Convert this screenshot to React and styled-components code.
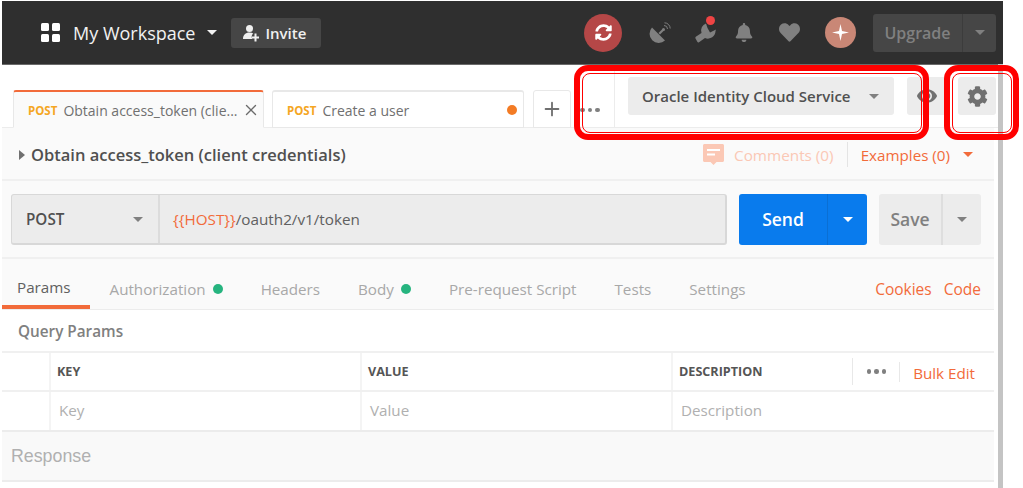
import React from 'react';
import styled, { createGlobalStyle } from 'styled-components';
import { FaBell, FaHeart, FaCog, FaEye, FaSyncAlt } from 'react-icons/fa';
import { Plus, X } from 'lucide-react';

const GlobalStyle = createGlobalStyle`
  html, body { margin: 0; padding: 0; background: #fff; }
  body { font-family: "Open Sans", "Liberation Sans", sans-serif; overflow: hidden; }
`;

const Page = styled.div`
  position: relative;
  width: 1023px;
  height: 488px;
  padding: 1px 20px 0 2px;
  box-sizing: border-box;
  overflow: hidden;
`;

const Scrollbar = styled.div`
  position: absolute;
  left: 998px;
  top: 64px;
  width: 5px;
  height: 424px;
  background: #c4c4c4;
`;

const Header = styled.header`
  display: flex;
  align-items: center;
  justify-content: space-between;
  height: 63px;
  padding: 0 7px 0 39px;
  background: #2f2f2f;
  border-bottom: 1px solid #6a6a6a;
`;

const HeaderGroup = styled.div`
  display: flex;
  align-items: center;
`;

const GridIcon = styled.svg`
  width: 19px;
  height: 19px;
  fill: #fff;
`;

const WorkspaceName = styled.span`
  margin-left: 13px;
  font-size: 18px;
  color: #f2f2f2;
`;

const Caret = styled.span`
  display: inline-block;
  width: 0;
  height: 0;
  border-left: ${p => p.$size || 5}px solid transparent;
  border-right: ${p => p.$size || 5}px solid transparent;
  border-top: ${p => (p.$size || 5) + 0.5}px solid ${p => p.$color || '#808080'};
`;

const WorkspaceCaret = styled(Caret)`
  margin: 0 14px 0 12px;
`;

const InviteButton = styled.div`
  display: flex;
  align-items: center;
  gap: 6px;
  width: 90px;
  height: 30px;
  padding-left: 12px;
  box-sizing: border-box;
  border-radius: 3px;
  background: #464646;
  color: #f0f0f0;
  font-size: 15px;
  font-weight: 600;
`;

const SyncBadge = styled.div`
  display: flex;
  align-items: center;
  justify-content: center;
  width: 38px;
  height: 38px;
  margin-right: 26px;
  border-radius: 50%;
  background: #b54747;
  color: #fff;
  font-size: 17px;
`;

const HeaderIcon = styled.div`
  position: relative;
  display: flex;
  align-items: center;
  justify-content: center;
  width: ${p => p.$w}px;
  margin-right: ${p => p.$gap}px;
  color: #808080;
  font-size: ${p => p.$size}px;
`;

const RedDot = styled.span`
  position: absolute;
  top: -6px;
  right: 2px;
  width: 9px;
  height: 9px;
  border-radius: 50%;
  background: #ef4444;
`;

const Avatar = styled.div`
  display: flex;
  align-items: center;
  justify-content: center;
  width: 31px;
  height: 31px;
  margin-right: 17px;
  border-radius: 50%;
  background: #c98776;
`;

const UpgradeButton = styled.div`
  display: flex;
  align-items: center;
  width: 123px;
  height: 38px;
  border-radius: 3px;
  background: #464646;
  color: #808080;
  font-size: 16px;
  font-weight: 600;
`;

const UpgradeLabel = styled.span`
  flex: 0 0 89px;
  line-height: 38px;
  text-align: center;
  border-right: 1px solid #3c3c3c;
`;

const UpgradeCaret = styled(Caret)`
  margin-left: 12px;
`;

const TabBar = styled.div`
  display: flex;
  align-items: stretch;
  height: 63px;
  padding-left: 11px;
  border-bottom: 1px solid #ececec;
  box-sizing: border-box;
`;

const TabsArea = styled.div`
  display: flex;
  align-items: flex-end;
  width: 601px;
  box-sizing: border-box;
  margin-bottom: -1px;
`;

const Tab = styled.div`
  display: flex;
  align-items: center;
  width: ${p => p.$w}px;
  height: 38px;
  margin-right: 8px;
  padding-left: 14px;
  padding-top: 1px;
  box-sizing: border-box;
  background: ${p => (p.$active ? '#fafafa' : '#fff')};
  border: 1px solid #e8e8e8;
  border-top: 2px solid ${p => (p.$active ? '#f26b3a' : '#e8e8e8')};
  border-bottom: ${p => (p.$active ? '1px solid #fafafa' : '1px solid #e8e8e8')};
  border-radius: 3px 3px 0 0;
  font-size: 14px;
  color: #707070;
`;

const MethodTag = styled.span`
  margin-right: 6px;
  color: #f5a623;
  font-size: 11.5px;
  font-weight: 700;
`;

const CloseIcon = styled.span`
  display: flex;
  margin-left: 4px;
  color: #6b6b6b;
`;

const UnsavedDot = styled.span`
  width: 10px;
  height: 10px;
  margin-left: 98px;
  border-radius: 50%;
  background: #f37b24;
`;

const AddTab = styled.div`
  display: flex;
  align-items: center;
  justify-content: center;
  width: 38px;
  height: 38px;
  margin-left: 1px;
  box-sizing: border-box;
  border: 1px solid #e8e8e8;
  border-radius: 3px 3px 0 0;
  color: #6f6f6f;
`;

const Dots = styled.div`
  display: flex;
  gap: 3px;
  margin-left: ${p => p.$ml || 0}px;
  margin-bottom: ${p => p.$mb || 0}px;
`;

const Dot = styled.span`
  width: 4.5px;
  height: 4.5px;
  border-radius: 50%;
  background: #808080;
`;

const EnvArea = styled.div`
  display: flex;
  align-items: flex-start;
  flex: 1;
  padding: 12px 0 0 13px;
  border-left: 1px solid #ececec;
`;

const EnvSelect = styled.div`
  display: flex;
  align-items: center;
  width: 266px;
  height: 38px;
  padding-left: 14px;
  box-sizing: border-box;
  border-radius: 3px;
  background: #ececec;
  color: #505050;
  font-size: 15px;
  font-weight: 600;
`;

const EnvName = styled.span`
  flex: 0 0 212px;
  white-space: nowrap;
`;

const EnvCaret = styled(Caret)`
  margin-left: 15px;
`;

const SquareButton = styled.div`
  display: flex;
  align-items: center;
  justify-content: center;
  width: ${p => p.$w}px;
  height: 38px;
  margin-left: ${p => p.$ml}px;
  border-radius: 3px;
  background: #ececec;
  color: #707070;
  font-size: ${p => p.$size}px;
`;

const Panel = styled.div`
  width: 992px;
  background: #fafafa;
`;

const TitleRow = styled.div`
  display: flex;
  align-items: center;
  height: 53px;
  padding: 2px 21px 0 17px;
  box-sizing: border-box;
  border-bottom: 2px solid #f0f0f0;
`;

const TitleCaret = styled.span`
  width: 0;
  height: 0;
  margin-right: 6px;
  border-top: 5px solid transparent;
  border-bottom: 5px solid transparent;
  border-left: 6px solid #707070;
`;

const RequestTitle = styled.span`
  flex: 1;
  color: #505050;
  font-size: 16.5px;
  font-weight: 600;
`;

const CommentLabel = styled.span`
  margin-left: 10px;
  color: #fbc8b5;
  font-size: 15.3px;
`;

const VDivider = styled.span`
  width: 1px;
  height: 25px;
  margin: 0 13px;
  background: #e4e4e4;
`;

const OrangeText = styled.span`
  color: #f26b3a;
  font-size: ${p => p.$size || 15.2}px;
`;

const ExamplesCaret = styled(Caret)`
  margin-left: 13px;
`;

const UrlRow = styled.div`
  display: flex;
  align-items: center;
  height: 78px;
  padding: 1px 0 0 9px;
  box-sizing: border-box;
  border-bottom: 2px solid #f0f0f0;
`;

const UrlGroup = styled.div`
  display: flex;
  width: 716px;
  height: 51px;
  box-sizing: border-box;
  border: 1px solid #d8d8d8;
  border-width: 1px 2px 2px 1px;
  border-radius: 3px;
  background: #ececec;
  font-size: 15.25px;
`;

const MethodSelect = styled.div`
  display: flex;
  align-items: center;
  justify-content: space-between;
  width: 148px;
  padding: 0 15px 0 14px;
  box-sizing: border-box;
  border-right: 2px solid #dcdcdc;
  color: #505050;
  font-weight: 600;
`;

const UrlInput = styled.div`
  display: flex;
  align-items: center;
  padding-left: 13px;
  color: #606060;
`;

const VarText = styled.span`
  color: #f26b3a;
`;

const SplitButton = styled.div`
  display: flex;
  align-items: center;
  width: ${p => p.$w}px;
  height: 51px;
  margin-left: 12px;
  border-radius: 3px;
  background: ${p => (p.$primary ? '#097bed' : '#ececec')};
  color: ${p => (p.$primary ? '#fff' : '#808080')};
  font-size: 17.5px;
  font-weight: 600;
`;

const SplitLabel = styled.span`
  flex: 0 0 ${p => p.$w}px;
  line-height: 51px;
  text-align: center;
  box-sizing: border-box;
  border-right: ${p => (p.$primary ? '1px solid #0a6fd4' : '2px solid #dedede')};
`;

const SplitCaret = styled.span`
  flex: 1;
  display: flex;
  justify-content: center;
`;

const NavRow = styled.div`
  display: flex;
  align-items: stretch;
  height: 51px;
  box-sizing: border-box;
  padding-right: 13px;
  border-bottom: 1px solid #ececec;
`;

const NavTab = styled.div`
  display: flex;
  align-items: center;
  gap: 7px;
  margin-right: ${p => p.$gap}px;
  height: 50px;
  box-sizing: border-box;
  padding: ${p => (p.$active ? '9px 19px 0 15px' : '9px 0 0')};
  border-bottom: ${p => (p.$active ? '4px solid #f26b3a' : 'none')};
  color: ${p => (p.$active ? '#606060' : '#a8a8a8')};
  font-size: 15.2px;
`;

const GreenDot = styled.span`
  width: 10px;
  height: 10px;
  border-radius: 50%;
  background: #26b47f;
`;

const NavLinks = styled.div`
  display: flex;
  align-items: center;
  gap: 12px;
  margin-left: auto;
  padding-top: 9px;
`;

const ParamsPanel = styled.div`
  background: #fff;
`;

const ParamsTitle = styled.div`
  display: flex;
  align-items: center;
  height: 41px;
  padding-left: 16px;
  color: #808080;
  font-size: 15.3px;
  font-weight: 600;
`;

const TableRow = styled.div`
  display: grid;
  grid-template-columns: 47px 311px 311px 1fr;
  height: ${p => p.$h}px;
  box-sizing: border-box;
  border-top: 2px solid #f0f0f0;
`;

const Cell = styled.div`
  display: flex;
  align-items: center;
  padding-left: ${p => p.$pl || 6}px;
  padding-bottom: ${p => (p.$head ? 0 : 3)}px;
  border-left: ${p => (p.$first ? 'none' : '2px solid #f4f4f4')};
  color: ${p => (p.$head ? '#555' : '#b0b0b0')};
  font-size: ${p => (p.$head ? '12.6px' : '15.2px')};
  font-weight: ${p => (p.$head ? 700 : 400)};
`;

const HeadLabel = styled.span`
  flex: 1;
`;

const HeadDivider = styled.span`
  width: 1px;
  height: ${p => p.$h}px;
  margin-left: ${p => p.$ml || 0}px;
  background: #e8e8e8;
`;

const BulkEdit = styled.span`
  margin: 2px 19px 0 13px;
  color: #f26b3a;
  font-size: 15.2px;
  font-weight: 400;
`;

const ResponseBar = styled.div`
  display: flex;
  align-items: center;
  height: 52px;
  padding: 1px 0 0 9px;
  box-sizing: border-box;
  background: #f9f9f9;
  border-top: 2px solid #ececec;
  border-bottom: 2px solid #ececec;
  color: #b0b0b0;
  font-family: "Liberation Sans", Arial, sans-serif;
  font-size: 17.8px;
`;

const Callout = styled.div`
  position: absolute;
  left: ${p => p.$x}px;
  top: 65px;
  width: ${p => p.$w}px;
  height: 75px;
  box-sizing: border-box;
  border: 6px solid #ff0000;
  border-radius: 14px;
  &::after {
    content: '';
    position: absolute;
    inset: 1.5px;
    border: 1.5px solid #ff0000;
    border-radius: 8px;
  }
`;

const Grid = () => (
  <GridIcon viewBox="0 0 19 19">
    <rect x="0" y="0" width="8" height="8" rx="1.5" />
    <rect x="11" y="0" width="8" height="8" rx="1.5" />
    <rect x="0" y="11" width="8" height="8" rx="1.5" />
    <rect x="11" y="11" width="8" height="8" rx="1.5" />
  </GridIcon>
);

const InviteIcon = () => (
  <svg width="16" height="18" viewBox="0 0 16 18" fill="#f0f0f0">
    <circle cx="6.5" cy="4.5" r="3.5" />
    <path d="M0 15c0-4 2.5-6.5 6.5-6.5 1.5 0 2.8.4 3.8 1.1-1 .7-1.6 1.9-1.6 3.2 0 .8.2 1.6.6 2.2z" />
    <path d="M11.5 9.5h2v3h2.5v2h-2.5v3h-2v-3h-2.5v-2h2.5z" />
  </svg>
);

const DishIcon = () => (
  <svg width="22" height="22" viewBox="0 0 22 22" fill="currentColor">
    <path d="M3 5.5 L16 18.5 A9.2 9.2 0 0 1 3 5.5z" />
    <path d="M9.5 11 L13.5 7 L15 8.5 L11 12.5z" />
    <circle cx="14.5" cy="7.5" r="1.5" />
    <path d="M15 3.5a3.5 3.5 0 0 1 3.5 3.5M15.5 .8a5.8 5.8 0 0 1 5.7 5.7" fill="none" stroke="currentColor" strokeWidth="1" />
  </svg>
);

const WrenchIcon = () => (
  <svg width="22" height="21" viewBox="0 0 22 21" fill="currentColor">
    <path d="M11 1.5 A7.5 7.5 0 0 0 6.5 11 L.8 14.8 Q0 15.5 .5 16.5 L2.5 20 Q3 20.8 4 20.2 L10 16 A7.5 7.5 0 0 0 20.5 9 L21 7.5 L15 10.5 L12.5 6 z" />
  </svg>
);

const Sparkle = () => (
  <svg width="17" height="17" viewBox="0 0 17 17" fill="#fff">
    <path d="M8.5 0 L10 7 L17 8.5 L10 10 L8.5 17 L7 10 L0 8.5 L7 7z" />
  </svg>
);

const CommentIcon = () => (
  <svg width="21" height="21" viewBox="0 0 21 21">
    <path d="M1.5 0h18c.8 0 1.5.7 1.5 1.5v15c0 .8-.7 1.5-1.5 1.5h-6l-3 3-3-3h-6c-.8 0-1.5-.7-1.5-1.5v-15c0-.8.7-1.5 1.5-1.5z" fill="#fbc8b5" />
    <rect x="4" y="5" width="13" height="2" fill="#fff" />
    <rect x="4" y="9.5" width="8" height="2" fill="#fff" />
  </svg>
);

const ThreeDots = ({ ml, mb }) => (
  <Dots $ml={ml} $mb={mb}>
    <Dot />
    <Dot />
    <Dot />
  </Dots>
);

const navTabs = [
  { label: 'Authorization', gap: 38, dot: true },
  { label: 'Headers', gap: 38 },
  { label: 'Body', gap: 38, dot: true },
  { label: 'Pre-request Script', gap: 38 },
  { label: 'Tests', gap: 38 },
  { label: 'Settings', gap: 0 },
];

export default function App() {
  return (
    <Page>
      <GlobalStyle />
      <Header>
        <HeaderGroup>
          <Grid />
          <WorkspaceName>My Workspace</WorkspaceName>
          <WorkspaceCaret $color="#f2f2f2" />
          <InviteButton>
            <InviteIcon />
            Invite
          </InviteButton>
        </HeaderGroup>
        <HeaderGroup>
          <SyncBadge><FaSyncAlt /></SyncBadge>
          <HeaderIcon $w={24} $gap={23} $size={22}><DishIcon /></HeaderIcon>
          <HeaderIcon $w={22} $gap={18} $size={20}>
            <WrenchIcon />
            <RedDot />
          </HeaderIcon>
          <HeaderIcon $w={18} $gap={25} $size={19}><FaBell /></HeaderIcon>
          <HeaderIcon $w={22} $gap={25} $size={21}><FaHeart /></HeaderIcon>
          <Avatar><Sparkle /></Avatar>
          <UpgradeButton>
            <UpgradeLabel>Upgrade</UpgradeLabel>
            <UpgradeCaret />
          </UpgradeButton>
        </HeaderGroup>
      </Header>

      <TabBar>
        <TabsArea>
          <Tab $active $w={251}>
            <MethodTag>POST</MethodTag>
            Obtain access_token (clie...
            <CloseIcon><X size={18} strokeWidth={1.8} /></CloseIcon>
          </Tab>
          <Tab $w={252}>
            <MethodTag>POST</MethodTag>
            Create a user
            <UnsavedDot />
          </Tab>
          <AddTab><Plus size={22} strokeWidth={2} /></AddTab>
          <ThreeDots ml={9} mb={16} />
        </TabsArea>
        <EnvArea>
          <EnvSelect>
            <EnvName>Oracle Identity Cloud Service</EnvName>
            <EnvCaret />
          </EnvSelect>
          <SquareButton $w={40} $ml={13} $size={20}><FaEye /></SquareButton>
          <SquareButton $w={38} $ml={11} $size={21}><FaCog /></SquareButton>
        </EnvArea>
      </TabBar>

      <Panel>
        <TitleRow>
          <TitleCaret />
          <RequestTitle>Obtain access_token (client credentials)</RequestTitle>
          <CommentIcon />
          <CommentLabel>Comments (0)</CommentLabel>
          <VDivider />
          <OrangeText>Examples (0)</OrangeText>
          <ExamplesCaret $color="#f26b3a" />
        </TitleRow>

        <UrlRow>
          <UrlGroup>
            <MethodSelect>
              POST
              <Caret />
            </MethodSelect>
            <UrlInput>
              <VarText>{'{{HOST}}'}</VarText>/oauth2/v1/token
            </UrlInput>
          </UrlGroup>
          <SplitButton $primary $w={128}>
            <SplitLabel $primary $w={89}>Send</SplitLabel>
            <SplitCaret><Caret $color="#fff" /></SplitCaret>
          </SplitButton>
          <SplitButton $w={102}>
            <SplitLabel $w={64}>Save</SplitLabel>
            <SplitCaret><Caret /></SplitCaret>
          </SplitButton>
        </UrlRow>

        <NavRow>
          <NavTab $active $gap={20}>Params</NavTab>
          {navTabs.map(t => (
            <NavTab key={t.label} $gap={t.gap}>
              {t.label}
              {t.dot && <GreenDot />}
            </NavTab>
          ))}
          <NavLinks>
            <OrangeText $size={15.5}>Cookies</OrangeText>
            <OrangeText $size={15.5}>Code</OrangeText>
          </NavLinks>
        </NavRow>

        <ParamsPanel>
          <ParamsTitle>Query Params</ParamsTitle>
          <TableRow $h={39}>
            <Cell $first />
            <Cell $head>KEY</Cell>
            <Cell $head>VALUE</Cell>
            <Cell $head>
              <HeadLabel>DESCRIPTION</HeadLabel>
              <HeadDivider $h={27} />
              <ThreeDots ml={14} />
              <HeadDivider $h={20} $ml={13} />
              <BulkEdit>Bulk Edit</BulkEdit>
            </Cell>
          </TableRow>
          <TableRow $h={40}>
            <Cell $first />
            <Cell $pl={8}>Key</Cell>
            <Cell $pl={8}>Value</Cell>
            <Cell $pl={8}>Description</Cell>
          </TableRow>
        </ParamsPanel>

        <ResponseBar>Response</ResponseBar>
      </Panel>

      <Scrollbar />
      <Callout $x={574} $w={355} />
      <Callout $x={944} $w={75} />
    </Page>
  );
}
